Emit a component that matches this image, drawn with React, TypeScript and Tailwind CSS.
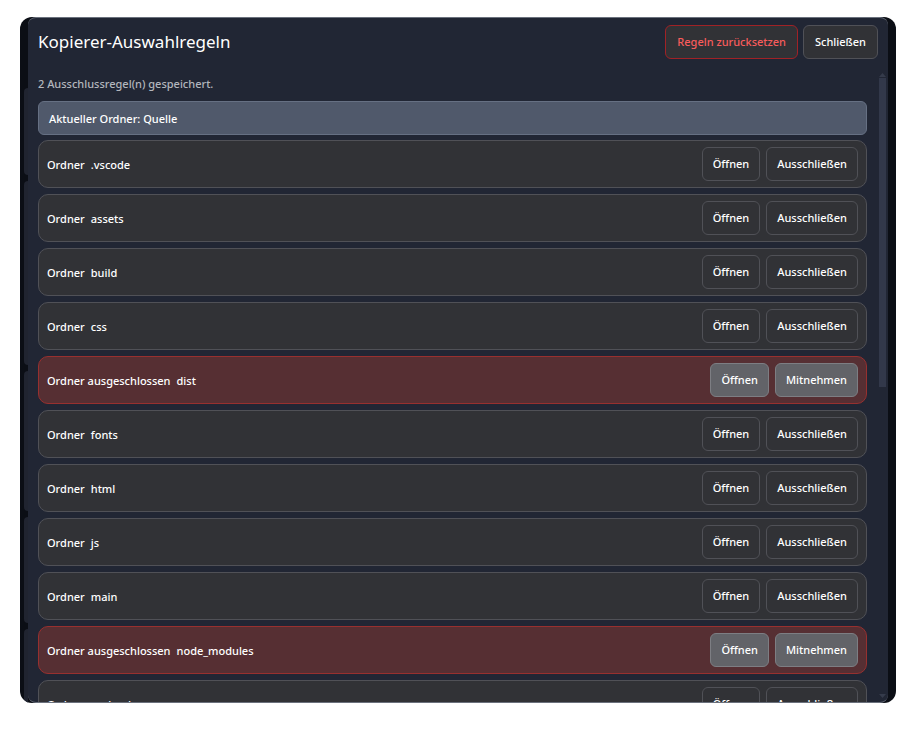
import { useState } from 'react'
import clsx from 'clsx'

type Folder = { name: string; excluded: boolean }

const FOLDERS: Folder[] = [
  { name: '.vscode', excluded: false },
  { name: 'assets', excluded: false },
  { name: 'build', excluded: false },
  { name: 'css', excluded: false },
  { name: 'dist', excluded: true },
  { name: 'fonts', excluded: false },
  { name: 'html', excluded: false },
  { name: 'js', excluded: false },
  { name: 'main', excluded: false },
  { name: 'node_modules', excluded: true },
  { name: 'preload', excluded: false },
]

export default function App() {
  const [folders, setFolders] = useState(FOLDERS)
  const excludedCount = folders.filter(f => f.excluded).length

  const toggle = (name: string) => {
    setFolders(folders.map(f => (f.name === name ? { ...f, excluded: !f.excluded } : f)))
  }

  const reset = () => setFolders(folders.map(f => ({ ...f, excluded: false })))

  return (
    <div className="h-screen bg-white pt-[17px] pr-[18px] pb-[29px] pl-5 font-['Noto_Sans','Open_Sans',sans-serif] text-[11px] font-medium text-white">
      <div className="flex h-full overflow-hidden rounded-xl bg-[#0b0e15] pr-2">
        <Backdrop />
        <section
          role="dialog"
          aria-labelledby="dialog-title"
          className="flex min-w-0 flex-1 flex-col rounded-lg border-y border-[#6b717d] bg-[#212634]"
        >
          <header className="flex items-center gap-[5px] px-2.5 pt-[7px]">
            <h1 id="dialog-title" className="flex-1 text-[17px] leading-6 font-normal">Kopierer-Auswahlregeln</h1>
            <button
              onClick={reset}
              className="h-[34px] rounded-md border border-[#a02226] bg-[#313236] px-[11px] text-[#f85c5c]"
            >
              Regeln zurücksetzen
            </button>
            <button className="h-[34px] rounded-md border border-[#505157] bg-[#313236] px-[11px]">Schließen</button>
          </header>

          <div className="mt-3 flex min-h-0 flex-1">
            <div className="min-w-0 flex-1 overflow-y-auto pl-2.5 [scrollbar-width:none]">
              <p className="mt-1 leading-[18px] text-[#b3b6bd]">{excludedCount} Ausschlussregel(n) gespeichert.</p>
              <div className="mt-2 flex h-[34px] items-center rounded-md border border-[#667083] bg-[#50596b] px-2.5 pt-0.5">
                Aktueller Ordner: Quelle
              </div>
              <ul className="mt-[5px] flex flex-col gap-1.5">
                {folders.map(folder => (
                  <FolderRow key={folder.name} folder={folder} onToggle={() => toggle(folder.name)} />
                ))}
              </ul>
            </div>
            <Scrollbar />
          </div>
        </section>
      </div>
    </div>
  )
}

function FolderRow({ folder, onToggle }: { folder: Folder; onToggle: () => void }) {
  const { name, excluded } = folder
  return (
    <li
      className={clsx(
        'flex h-12 shrink-0 items-center gap-1.5 rounded-[10px] border px-2',
        excluded ? 'border-[#97302f] bg-[#562f33]' : 'border-[#505157] bg-[#313236]',
      )}
    >
      <span className="flex flex-1 gap-1.5 pt-0.5">
        <span>{excluded ? 'Ordner ausgeschlossen' : 'Ordner'}</span>
        <span>{name}</span>
      </span>
      <RowButton label="Öffnen" light={excluded} />
      <RowButton label={excluded ? 'Mitnehmen' : 'Ausschließen'} light={excluded} onClick={onToggle} />
    </li>
  )
}

function RowButton({ label, light, onClick }: { label: string; light: boolean; onClick?: () => void }) {
  return (
    <button
      onClick={onClick}
      className={clsx(
        'h-[34px] rounded-md border px-2.5',
        light ? 'border-[#7d7e83] bg-[#626368]' : 'border-[#505157] bg-[#313236]',
      )}
    >
      {label}
    </button>
  )
}

// edges of the cards that lie behind the dialog
function Backdrop() {
  return (
    <div className="flex w-2 shrink-0 flex-col gap-1.5 pt-[71px] pl-1" aria-hidden="true">
      <div className="h-[87px] rounded-l-md bg-[#202430]" />
      <div className="h-[184px] rounded-l-md bg-[#202430]" />
      <div className="h-[140px] rounded-l-md bg-[#202430]" />
      <div className="h-[106px] rounded-l-md bg-[#202430]" />
      <div className="flex-1 rounded-l-md bg-[#202430]" />
    </div>
  )
}

function Scrollbar() {
  return (
    <div className="ml-3 flex w-[9px] flex-col pr-0.5" aria-hidden="true">
      <svg viewBox="0 0 7 4" className="mt-0.5 h-1 w-[7px]" fill="#353b4b">
        <path d="M3.5 0 7 4H0z" />
      </svg>
      <div className="mt-px h-[49%] bg-[#32384a]" />
      <svg viewBox="0 0 7 4" className="mt-auto mb-1 h-1 w-[7px]" fill="#353b4b">
        <path d="M0 0h7L3.5 4z" />
      </svg>
    </div>
  )
}
